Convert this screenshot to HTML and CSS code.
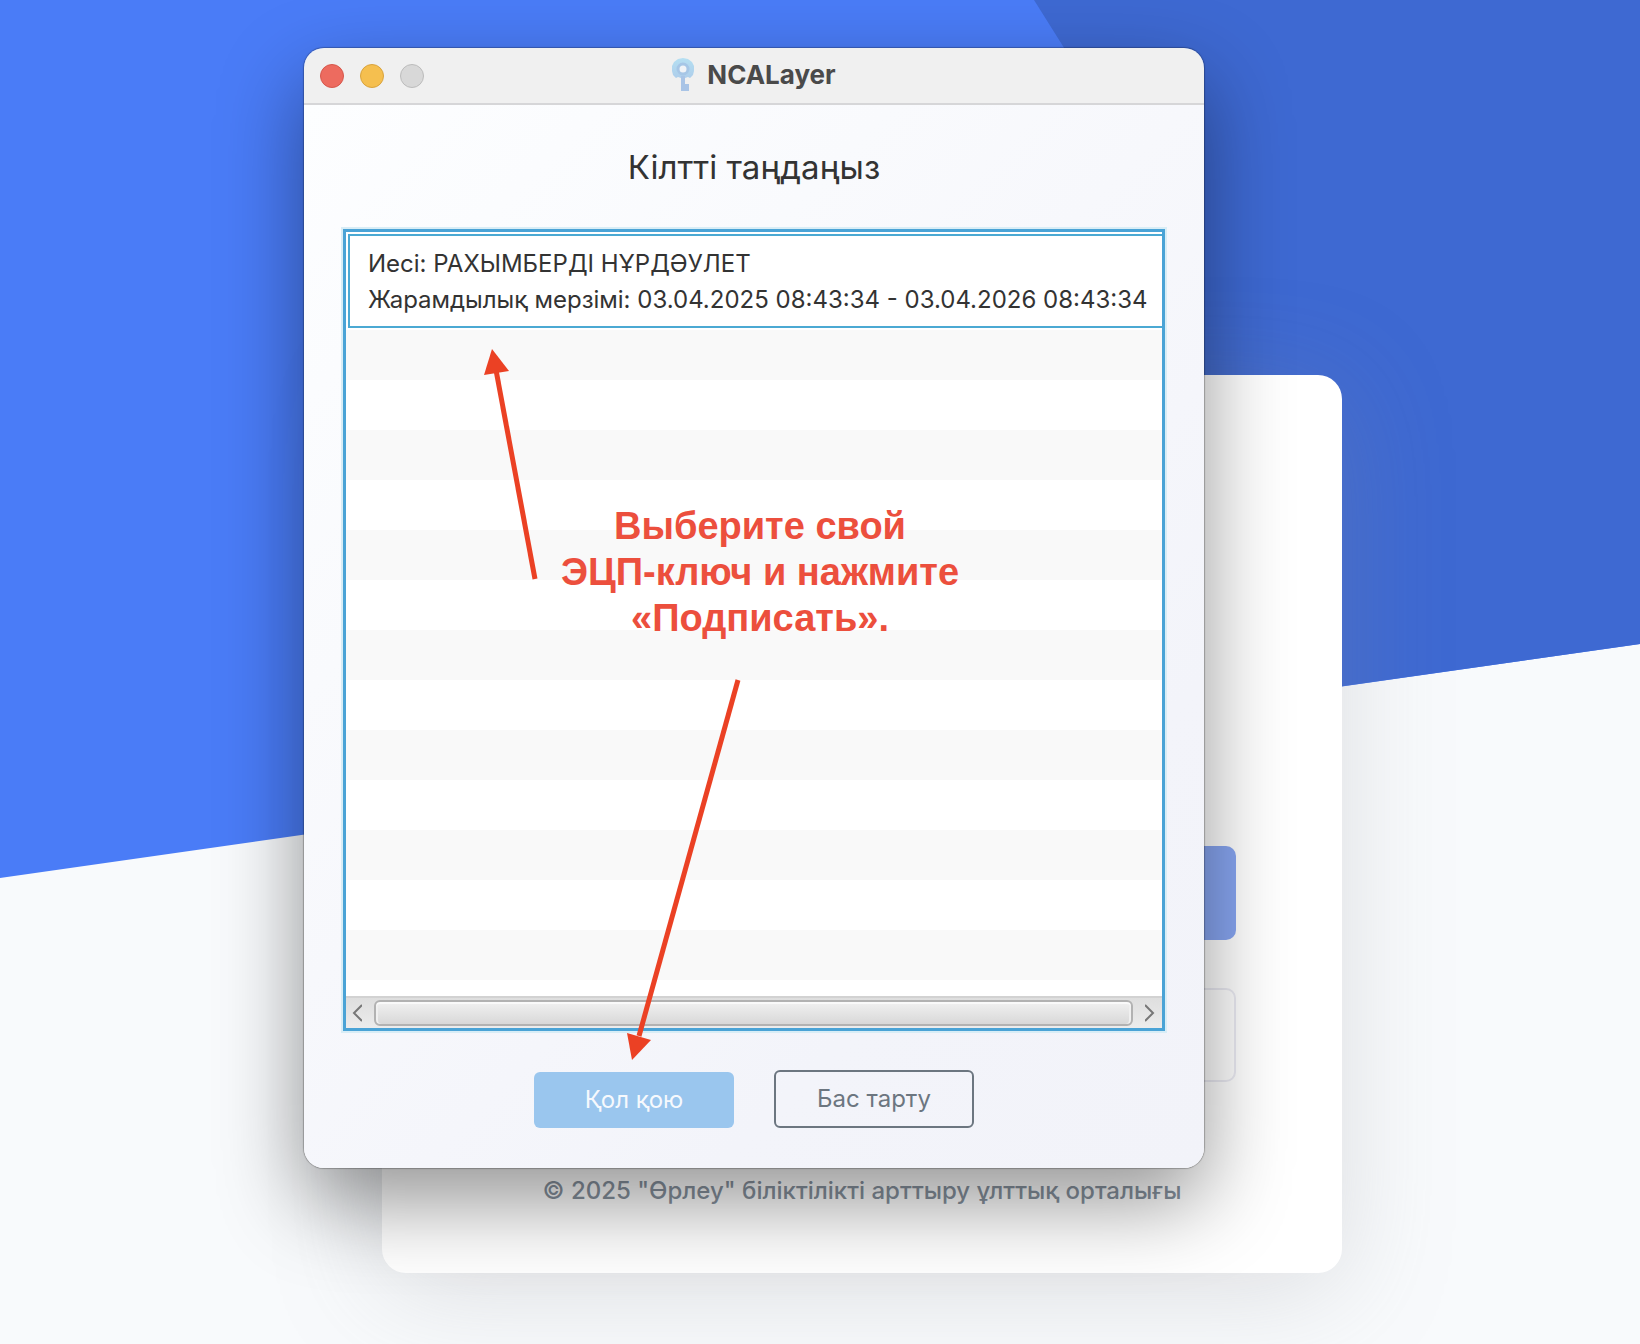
FILE: index.html
```html
<!DOCTYPE html>
<html lang="kk">
<head>
    <meta charset="UTF-8">
    <meta name="viewport" content="width=device-width, initial-scale=1.0">
    <title>NCALayer</title>
    <link rel="stylesheet" href="styles.css">
</head>
<body>

<div class="page">
    <div class="page-blue"></div>
    <div class="page-blue-dark"></div>

    <!-- Login card behind the dialog -->
    <main class="card">
        <div class="card-actions">
            <button type="button" class="card-btn card-btn-primary"></button>
            <button type="button" class="card-btn card-btn-outline"></button>
        </div>
        <p class="card-footer">© 2025 "Өрлеу" біліктілікті арттыру ұлттық орталығы</p>
    </main>

    <!-- Key selection dialog -->
    <section class="dialog">
        <header class="titlebar">
            <div class="lights">
                <span class="light light-red"></span>
                <span class="light light-yellow"></span>
                <span class="light light-gray"></span>
            </div>
            <div class="titlebar-title">
                <svg width="22" height="34" viewBox="0 0 22 34">
                    <defs>
                        <linearGradient id="key" x1="0" y1="0" x2="0" y2="1">
                            <stop offset="0" stop-color="#b5dff2"/>
                            <stop offset="1" stop-color="#a9c3e6"/>
                        </linearGradient>
                    </defs>
                    <path fill="url(#key)" d="M11 0l5 1 4 3 2 4v5l-1 4-3 3-2-1-3 1v6h4v7H9V20l-3-1-2 1-3-3-1-4V8l2-4 4-3z"/>
                    <path fill="#a9c4e6" d="M9 18h4v8h4v7H9z"/>
                    <circle cx="11" cy="11" r="5" fill="#f0f3f7" stroke="#a6c6e6" stroke-width="3"/>
                </svg>
                <span>NCALayer</span>
            </div>
        </header>

        <div class="dialog-body">
            <h1>Кілтті таңдаңыз</h1>

            <div class="key-list">
                <div class="key-item">
                    <div>Иесі: РАХЫМБЕРДІ НҰРДӘУЛЕТ</div>
                    <div>Жарамдылық мерзімі: 03.04.2025 08:43:34 - 03.04.2026 08:43:34</div>
                </div>
                <div class="stripes"></div>
                <div class="scrollbar">
                    <svg width="10" height="18" viewBox="0 0 10 18"><path d="M10 1L2 9l8 8"/></svg>
                    <div class="thumb"></div>
                    <svg width="10" height="18" viewBox="0 0 10 18"><path d="M0 1l8 8-8 8"/></svg>
                </div>
            </div>

            <div class="dialog-actions">
                <button type="button" class="btn btn-sign">Қол қою</button>
                <button type="button" class="btn btn-cancel">Бас тарту</button>
            </div>
        </div>

        <!-- Hint with arrows -->
        <svg class="arrows" width="900" height="1120" viewBox="0 0 900 1120">
            <path class="arrow-line" d="M231 531L192 322"/>
            <path class="arrow-head" d="M188 301l17 22-25 4z"/>
            <path class="arrow-line" d="M434 632L335 988"/>
            <path class="arrow-head" d="M328 1012l-5-27 24 7z"/>
        </svg>
        <p class="hint">Выберите свой<br>ЭЦП-ключ и нажмите<br>«Подписать».</p>
    </section>
</div>

</body>
</html>
```

FILE: styles.css
```css
* {
    box-sizing: border-box;
}
body {
    margin: 0;
    font-family: Inter, "Noto Sans", sans-serif;
    color: #333;
}
.page {
    position: relative;
    display: flex;
    min-height: 100vh;
    padding: 375px 298px 71px 382px;
    background-color: #f8fafc;
    overflow: hidden;
}
.page-blue,
.page-blue-dark {
    position: absolute;
    top: 0;
    left: 0;
    width: 100%;
    height: 878px;
    background-color: #4a7cf7;
    clip-path: polygon(0 0, 100% 0, 100% 644px, 0 100%);
}
.page-blue-dark {
    background-color: #3e69d2;
    clip-path: polygon(1034px 0, 100% 0, 100% 644px, 1154px 713px, 1154px 191px);
}
.card {
    position: relative;
    flex: 1;
    display: flex;
    flex-direction: column;
    justify-content: flex-end;
    padding: 0 106px 65px;
    background-color: #fff;
    border-radius: 24px;
    box-shadow: 0 16px 110px rgba(140, 140, 142, 0.25);
}
.card-actions {
    display: flex;
    flex-direction: column;
    gap: 48px;
}
.card-btn {
    height: 94px;
    border: none;
    border-radius: 10px;
}
.card-btn-primary {
    background-color: #88a6f2;
}
.card-btn-outline {
    background: none;
    border: 2px solid #ebebf3;
}
.card-footer {
    margin: 92px 0 0;
    font-size: 24px;
    line-height: 34px;
    font-weight: 500;
    text-align: center;
    white-space: nowrap;
    color: #87929e;
}

/* Dialog */
.dialog {
    position: absolute;
    top: 48px;
    left: 304px;
    right: 436px;
    border-radius: 20px;
    box-shadow: 0 0 1px 1px rgba(0, 0, 0, 0.25), 0 34px 84px rgba(0, 0, 0, 0.42);
}
.titlebar {
    position: relative;
    display: flex;
    align-items: center;
    justify-content: center;
    height: 57px;
    background-color: #f0f0f0;
    border-bottom: 2px solid #d6d6d8;
    border-radius: 20px 20px 0 0;
}
.lights {
    position: absolute;
    left: 16px;
    display: flex;
    gap: 16px;
}
.light {
    width: 24px;
    height: 24px;
    border-radius: 50%;
    border: 1px solid;
}
.light-red {
    background-color: #ed6b5f;
    border-color: #d6574c;
}
.light-yellow {
    background-color: #f5bf4f;
    border-color: #d9a33d;
}
.light-gray {
    background-color: #d8d8d8;
    border-color: #bcbcbc;
}
.titlebar-title {
    display: flex;
    align-items: center;
    gap: 13px;
    padding-bottom: 2px;
    font-size: 26px;
    font-weight: 700;
    color: #4a4a4a;
}
.dialog-body {
    padding: 40px 39px;
    background: linear-gradient(135deg, #fdfeff, #f3f4fa 75%, #f2f3f9);
    border-radius: 0 0 20px 20px;
}
h1 {
    margin: 0 0 40px;
    font-size: 33px;
    line-height: 44px;
    font-weight: 400;
    text-align: center;
}
.key-list {
    display: flex;
    flex-direction: column;
    height: 802px;
    padding-top: 2px;
    background-color: #fff;
    border: 3px solid #4aa3d6;
    box-shadow: 0 0 0 2px #d8edf6;
}
.key-item {
    margin-left: 2px;
    height: 94px;
    padding: 10px 18px;
    border: 2px solid #4ba9d3;
    border-right: none;
    font-size: 24px;
    line-height: 36px;
    white-space: nowrap;
}
.stripes {
    flex: 1;
    margin-top: 2px;
    background: repeating-linear-gradient(#f9f9f9 0 50px, #fff 50px 100px);
}
.scrollbar {
    display: flex;
    align-items: center;
    gap: 12px;
    height: 32px;
    padding: 0 7px 0 6px;
    background: linear-gradient(#dedede, #ececec);
    border-top: 2px solid #d2d2d2;
}
.scrollbar svg {
    fill: none;
    stroke: #777;
    stroke-width: 2;
}
.thumb {
    flex: 1;
    height: 26px;
    border: 2px solid #b2b2b2;
    border-radius: 6px;
    background: linear-gradient(#f1f1f1, #d8d8d8);
    box-shadow: inset 0 2px 0 #fafafa, inset 2px 0 0 #f0f0f0, inset -2px 0 0 #f0f0f0;
}
.dialog-actions {
    display: flex;
    justify-content: center;
    align-items: flex-end;
    gap: 40px;
    margin-top: 39px;
}
.btn {
    width: 200px;
    height: 56px;
    padding: 0 0 2px;
    border: none;
    border-radius: 6px;
    font-family: inherit;
    font-size: 24px;
}
.btn-sign {
    background-color: #9ac6ee;
    color: #f6f9fd;
}
.btn-cancel {
    height: 58px;
    background: none;
    border: 2px solid #6c7680;
    color: #6c7680;
}

/* Hint */
.arrows {
    position: absolute;
    top: 0;
    left: 0;
}
.arrow-line {
    stroke: #eb4124;
    stroke-width: 5;
}
.arrow-head {
    fill: #eb4124;
}
.hint {
    position: absolute;
    top: 455px;
    left: 0;
    width: 100%;
    margin: 0;
    padding-left: 12px;
    font-family: "Liberation Sans", Arial, sans-serif;
    font-size: 38px;
    line-height: 46px;
    font-weight: 700;
    text-align: center;
    color: #ec4f3d;
}
```
